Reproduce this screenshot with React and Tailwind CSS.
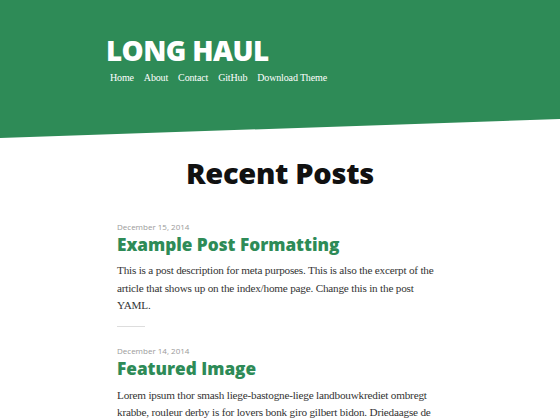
export default function App() {
  return (
    <div className="w-[560px] h-[420px] overflow-hidden bg-white">
      <header className="bg-[#2e8b57] h-[138px] pt-[31px] pl-[106px] [clip-path:polygon(0_0,100%_0,100%_119px,0_138px)]">
        <h1 className="text-white text-[27.8px] leading-[38px] font-extrabold tracking-[-0.6px] font-['Open_Sans',sans-serif]">
          LONG HAUL
        </h1>
        <nav className="flex gap-[10px] pl-[4px] pt-[1px] text-white text-[10px] leading-[16px] tracking-[-0.15px] font-['Liberation_Serif',serif]">
          <span>Home</span>
          <span>About</span>
          <span>Contact</span>
          <span>GitHub</span>
          <span>Download Theme</span>
        </nav>
      </header>
      <main className="flex flex-col items-center">
        <h2 className="mt-[17px] text-[29px] leading-[36px] font-extrabold tracking-[-0.3px] text-[#111] font-['Open_Sans',sans-serif]">
          Recent Posts
        </h2>
        <div className="w-[326px] mt-[30px]">
          <article className="flex flex-col">
            <div className="text-[8px] leading-[11px] text-[#9a9a9a] font-['Open_Sans',sans-serif]">December 15, 2014</div>
            <h3 className="mt-[1px] text-[17.2px] leading-[24px] font-extrabold text-[#2e8b57] font-['Open_Sans',sans-serif]">
              Example Post Formatting
            </h3>
            <p className="mt-[5px] text-[11.2px] leading-[17.5px] tracking-[-0.2px] text-[#333] font-['Liberation_Serif',serif]">
              This is a post description for meta purposes. This is also the excerpt of the article that shows up on the index/home page. Change this in the post YAML.
            </p>
          </article>
          <div className="w-[28px] h-px bg-[#ddd] mt-[11px] mb-[18px]" />
          <article className="flex flex-col">
            <div className="text-[8px] leading-[11px] text-[#9a9a9a] font-['Open_Sans',sans-serif]">December 14, 2014</div>
            <h3 className="mt-[1px] text-[17.2px] leading-[24px] font-extrabold text-[#2e8b57] font-['Open_Sans',sans-serif]">
              Featured Image
            </h3>
            <p className="mt-[6px] text-[11.2px] leading-[17.5px] tracking-[-0.2px] text-[#333] font-['Liberation_Serif',serif]">
              Lorem ipsum thor smash liege-bastogne-liege landbouwkrediet ombregt krabbe, rouleur derby is for lovers bonk giro gilbert bidon. Driedaagse de
            </p>
          </article>
        </div>
      </main>
    </div>
  );
}
